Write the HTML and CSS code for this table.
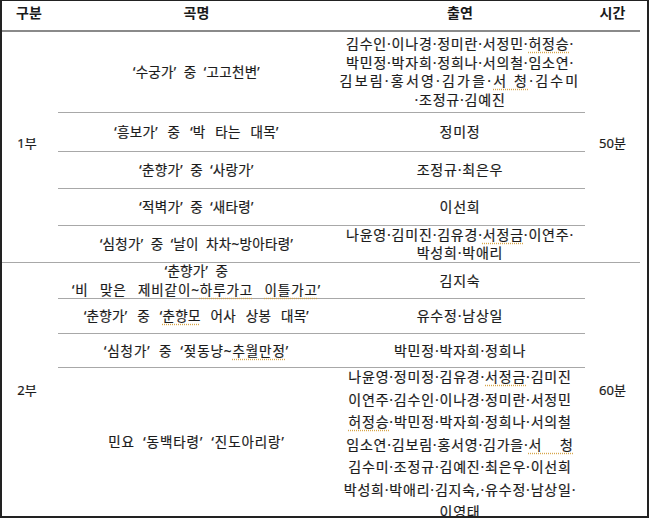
FILE: index.html
```html
<!DOCTYPE html>
<html lang="ko">
<head>
<meta charset="utf-8">
<title>공연 순서</title>
<link rel="stylesheet" href="styles.css">
</head>
<body>
<div class="frame">
  <div class="sheet">
    <div class="cell head c1">구분</div>
    <div class="cell head c2">곡명</div>
    <div class="cell head c3">출연</div>
    <div class="cell head c4">시간</div>

    <div class="cell part part1 c1">1부</div>
    <div class="cell part part1 c4">50분</div>

    <div class="cell song c2 r2">‘수궁가’ 중 ‘고고천변’</div>
    <div class="cell cast c3 r2">
      <div class="lines l18">
        <div class="ln">김수인·이나경·정미란·서정민·<span class="sp">허정승</span>·</div>
        <div class="ln">박민정·박자희·정희나·서의철·임소연·</div>
        <div class="ln wide">김보림·홍서영·김가을·<span class="sp">서 청</span>·김수미</div>
        <div class="ln">·조정규·김예진</div>
      </div>
    </div>

    <div class="cell song c2 r3 roomy">‘흥보가’ 중 ‘박 타는 대목’</div>
    <div class="cell cast c3 r3">정미정</div>

    <div class="cell song c2 r4">‘춘향가’ 중 ‘사랑가’</div>
    <div class="cell cast c3 r4">조정규·최은우</div>

    <div class="cell song c2 r5">‘적벽가’ 중 ‘새타령’</div>
    <div class="cell cast c3 r5">이선희</div>

    <div class="cell song c2 r6 end">‘심청가’ 중 ‘날이 차차~방아타령’</div>
    <div class="cell cast c3 r6 end">
      <div class="lines l18">
        <div class="ln">나윤영·김미진·김유경·<span class="sp">서정금</span>·이연주·</div>
        <div class="ln">박성희·박애리</div>
      </div>
    </div>

    <div class="cell part part2 c1">2부</div>
    <div class="cell part part2 c4">60분</div>

    <div class="cell song c2 r7">
      <div class="lines l18">
        <div class="ln">‘춘향가’ 중</div>
        <div class="ln spread">‘비 맞은 제비같이~<span class="sp">하루가고</span> <span class="sp">이틀가고</span>’</div>
      </div>
    </div>
    <div class="cell cast c3 r7">김지숙</div>

    <div class="cell song c2 r8 roomy">‘춘향가’ 중 ‘<span class="sp">춘향모</span>&nbsp;어사 상봉 대목’</div>
    <div class="cell cast c3 r8">유수정·남상일</div>

    <div class="cell song c2 r9 loose">‘심청가’ 중 ‘젖동냥~<span class="sp">추월만정</span>’</div>
    <div class="cell cast c3 r9">박민정·박자희·정희나</div>

    <div class="cell song c2 r10 last loose">민요 ‘동백타령’ ‘진도아리랑’</div>
    <div class="cell cast c3 r10 last">
      <div class="lines l22">
        <div class="ln">나윤영·정미정·김유경·<span class="sp">서정금</span>·김미진</div>
        <div class="ln">이연주·김수인·이나경·정미란·서정민</div>
        <div class="ln"><span class="sp">허정승</span>·박민정·박자희·정희나·서의철</div>
        <div class="ln">임소연·김보림·홍서영·김가을·<span class="sp">서&nbsp;&nbsp;&nbsp;&nbsp;청</span></div>
        <div class="ln">김수미·조정규·김예진·최은우·이선희</div>
        <div class="ln">박성희·박애리·김지숙,·유수정·남상일·</div>
        <div class="ln">이영태</div>
      </div>
    </div>
  </div>
</div>
</body>
</html>
```

FILE: styles.css
```css
html, body {
  margin: 0;
  padding: 0;
  background: #ffffff;
}

body {
  font-family: "Noto Sans", "Noto Sans CJK KR", sans-serif;
  font-size: 13px;
  color: #1c1c1c;
  -webkit-text-stroke: 0.2px #1c1c1c;
}

.frame {
  box-sizing: border-box;
  width: 649px;
  height: 518px;
  border-top: 1px solid #222;
  border-left: 2px solid #222;
  border-right: 2px solid #222;
  border-bottom: 2px solid #222;
  padding-right: 7px;
  overflow: hidden;
}

.sheet {
  display: grid;
  grid-template-columns: 56px 277px 250px 55px;
  grid-template-rows: 31px 81px 39px 37px 37px 37px 36px 35px 34px 148px;
}

.cell {
  box-sizing: border-box;
  display: flex;
  align-items: center;
  justify-content: center;
  text-align: center;
  white-space: nowrap;
  line-height: 18px;
}

.c1 { grid-column: 1; }
.c2 { grid-column: 2; }
.c3 { grid-column: 3; }
.c4 { grid-column: 4; }

.head {
  grid-row: 1;
  font-weight: 700;
  font-size: 14px;
  padding-bottom: 5px;
  border-bottom: 2px solid #8a8a8a;
  color: #1a1a1a;
  -webkit-text-stroke: 0;
}

.head.c1 {
  padding-right: 2px;
}

.r2 { grid-row: 2; }
.r3 { grid-row: 3; }
.r4 { grid-row: 4; }
.r5 { grid-row: 5; }
.r6 { grid-row: 6; }
.r7 { grid-row: 7; }
.r8 { grid-row: 8; }
.r9 { grid-row: 9; }
.r10 { grid-row: 10; }

.song, .cast {
  border-bottom: 1px solid #a8a8a8;
}

.song {
  font-size: 13.5px;
  letter-spacing: 0.3px;
  word-spacing: 3.5px;
}

.song.roomy {
  word-spacing: 6px;
}

.song.loose {
  letter-spacing: 0.9px;
  word-spacing: 4px;
}

.song .spread {
  letter-spacing: 0.9px;
  word-spacing: 7px;
}

.cast {
  font-size: 14px;
  letter-spacing: 0.8px;
}

.last {
  border-bottom: none;
}

.part1 {
  grid-row: 2 / 7;
  border-bottom: 1px solid #a8a8a8;
  padding-bottom: 8px;
}

.part2 {
  grid-row: 7 / 11;
}

.part.c1 {
  padding-right: 6px;
}

.lines {
  display: flex;
  flex-direction: column;
  align-items: center;
}

.l18 .ln { line-height: 18.5px; }
.l22 .ln { line-height: 22.5px; }

.r10 .lines {
  padding-top: 6px;
}

.cast .wide {
  letter-spacing: 2.2px;
}

.sp {
  text-decoration: underline dotted #d7a64a;
  text-underline-offset: 3px;
}
```
